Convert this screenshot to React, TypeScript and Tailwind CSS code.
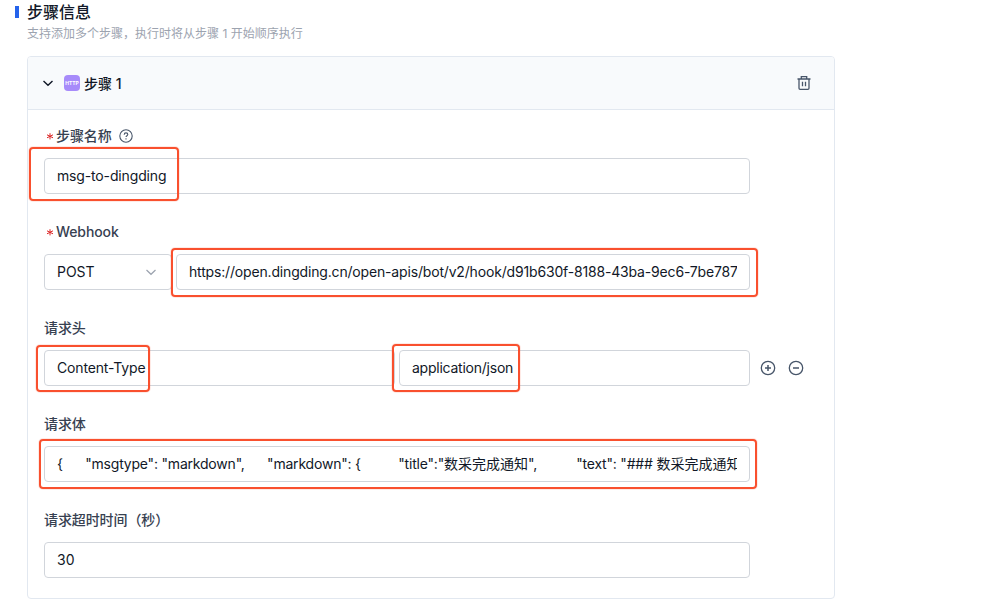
import type { ReactNode } from "react";

function Mark({ className }: { className: string }) {
  return (
    <div
      className={`pointer-events-none absolute rounded-[4px] border-2 border-[#f9502e] shadow-[0_0_0_1px_rgba(249,80,46,0.12)] ${className}`}
    />
  );
}

function Label({ children, required }: { children: ReactNode; required?: boolean }) {
  return (
    <div className="mb-3 flex h-5 items-center text-sm leading-5 font-medium tracking-[-0.1px] text-[#374151]">
      {required && (
        <svg width="12" height="20" viewBox="0 0 12 20" fill="none" stroke="#dc2626" strokeWidth="1">
          <path d="M6 7.2v6.2M3 8.8l6 3M3 11.8l6-3" />
        </svg>
      )}
      {children}
    </div>
  );
}

function Field({ children, className = "", tracking = "tracking-[-0.15px]" }: { children: ReactNode; className?: string; tracking?: string }) {
  return (
    <div className={`flex h-9 items-center rounded-[4px] border border-[#d1d5db] bg-white px-3 text-sm text-[#111827] ${className}`}>
      <div className={`w-full overflow-hidden whitespace-pre ${tracking}`}>{children}</div>
    </div>
  );
}

function Circle({ plus }: { plus?: boolean }) {
  return (
    <svg width="16" height="16" viewBox="0 0 16 16" fill="none" stroke="#475569" strokeWidth="1.3">
      <circle cx="8" cy="8" r="6.7" />
      <path d={plus ? "M5 8h6M8 5v6" : "M5 8h6"} strokeWidth="1.5" />
    </svg>
  );
}

export default function App() {
  return (
    <div className="h-[610px] w-[987px] overflow-hidden bg-white font-['Inter','Noto_Sans_CJK_SC',sans-serif]">
      <div className="flex h-6 items-center pl-[15px]">
        <div className="h-3 w-1 bg-[#2563eb]" />
        <h2 className="ml-2 text-base font-medium text-[#111827]">步骤信息</h2>
      </div>
      <p className="ml-[27px] h-8 pt-0.5 text-xs leading-4 text-[#9ca3af]">支持添加多个步骤，执行时将从步骤 1 开始顺序执行</p>

      <section className="ml-[27px] h-[543px] w-[808px] overflow-hidden rounded-[4px] border border-[#e2e8f0]">
        <header className="flex h-[53px] items-center border-b border-[#e2e8f0] bg-[#f8fafc] pr-[22px] pl-[14px]">
          <svg width="12" height="12" viewBox="0 0 12 12" fill="none" stroke="#111827" strokeWidth="1.4">
            <path d="M1.5 4 6 8.3 10.5 4" />
          </svg>
          <div className="ml-[10px] flex h-4 w-4 items-center justify-center rounded-[4px] bg-[#a78bfa] text-[5px] leading-none font-bold text-white">HTTP</div>
          <span className="ml-1 pt-0.5 text-sm font-medium text-[#111827]">步骤 1</span>
          <svg className="ml-auto" width="16" height="16" viewBox="0 0 16 16" fill="none" stroke="#475569" strokeWidth="1.3">
            <path d="M1.5 4h13M5.3 4V1.7h5.4V4" />
            <path d="M3 4v9.2q0 1.1 1.1 1.1h7.8q1.1 0 1.1-1.1V4M6.5 6.8v4.4M9.5 6.8v4.4" />
          </svg>
        </header>

        <div className="flex flex-col gap-7 px-4 pt-4">
          <div>
            <Label required>
              步骤名称
              <svg className="ml-1.5" width="16" height="16" viewBox="0 0 16 16" fill="none" stroke="#475569" strokeWidth="1.1">
                <circle cx="8" cy="8" r="6.2" />
                <path d="M6.2 6.7c0-1.1.8-1.8 1.8-1.8s1.8.7 1.8 1.6c0 1.2-1.8 1.3-1.8 2.6M8 10.3v1.2" />
              </svg>
            </Label>
            <div className="relative w-[706px]">
              <Field>msg-to-dingding</Field>
              <Mark className="-top-[11px] -left-[15px] h-[54px] w-[150px]" />
            </div>
          </div>

          <div>
            <Label required>Webhook</Label>
            <div className="relative flex w-[706px] gap-1">
              <div className="flex h-9 w-32 items-center justify-between rounded-[4px] border border-[#d1d5db] px-3 pr-[14px] text-sm tracking-[-0.05px] text-[#111827]">
                POST
                <svg width="12" height="12" viewBox="0 0 12 12" fill="none" stroke="#9ca3af" strokeWidth="1.2">
                  <path d="M1.5 4 6 8.3 10.5 4" />
                </svg>
              </div>
              <Field className="w-[574px]" tracking="tracking-[-0.17px]">https://open.dingding.cn/open-apis/bot/v2/hook/d91b630f-8188-43ba-9ec6-7be787</Field>
              <Mark className="-top-[6px] left-[127px] h-[49px] w-[587px]" />
            </div>
          </div>

          <div>
            <Label>请求头</Label>
            <div className="relative flex items-center gap-1">
              <Field className="w-[351px]">Content-Type</Field>
              <Field className="w-[351px]" tracking="tracking-[-0.24px]">application/json</Field>
              <div className="ml-1.5 flex gap-3">
                <Circle plus />
                <Circle />
              </div>
              <Mark className="-top-[5px] -left-[8px] h-[47px] w-[114px]" />
              <Mark className="-top-[6px] left-[348px] h-[48px] w-[128px]" />
            </div>
          </div>

          <div>
            <Label>请求体</Label>
            <div className="relative w-[706px]">
              <Field tracking="tracking-[-0.2px]">
                {'{      "msgtype": "markdown",      "markdown": {          "title":"'}
                <span className="tracking-normal">数采完成通知</span>
                {'",'}
                <span className="tracking-[-0.02px]">{"          "}</span>
                {'"text": "### '}
                <span className="tracking-normal">数采完成通知</span>
              </Field>
              <Mark className="-top-[7px] -left-[5px] h-[50px] w-[718px]" />
            </div>
          </div>

          <div>
            <Label>请求超时时间（秒）</Label>
            <Field className="w-[706px]" tracking="tracking-normal">30</Field>
          </div>
        </div>
      </section>
    </div>
  );
}
